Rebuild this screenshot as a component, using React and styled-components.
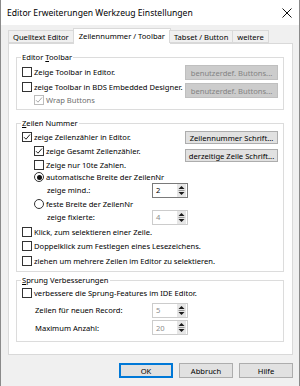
import React from "react";
import styled, { createGlobalStyle } from "styled-components";

const GlobalStyle = createGlobalStyle`
  html, body {
    margin: 0;
    padding: 0;
    background: #f0f0f0;
  }
  body {
    font-family: "Noto Sans", "Liberation Sans", sans-serif;
    font-size: 7.6px;
    color: #000;
  }
`;

const Check = ({ checked, disabled }) => (
  <CheckBox $disabled={disabled}>
    {checked && (
      <svg width="8" height="8" viewBox="0 0 8 8">
        <path
          d="M1 4.2 L3 6.2 L7 1.5"
          fill="none"
          stroke={disabled ? "#a8a8a8" : "#222"}
          strokeWidth="1"
        />
      </svg>
    )}
  </CheckBox>
);

const Radio = ({ checked }) => (
  <RadioCircle>{checked && <RadioDot />}</RadioCircle>
);

const Spin = ({ value, disabled }) => (
  <SpinBox $disabled={disabled}>
    <SpinValue $disabled={disabled}>{value}</SpinValue>
    <SpinArrows>
      <svg width="9" height="13" viewBox="0 0 9 13">
        <path d="M1.5 5 L4.5 2 L7.5 5 Z" fill="#1a1a1a" />
        <path d="M1.5 6.5 H7.5" stroke="#9a9a9a" strokeWidth="1" />
        <path d="M1.5 8 L4.5 11 L7.5 8 Z" fill="#1a1a1a" />
      </svg>
    </SpinArrows>
  </SpinBox>
);

export default function App() {
  return (
    <>
      <GlobalStyle />
      <Window>
        <TitleBar>
          <Title>Editor Erweiterungen Werkzeug Einstellungen</Title>
          <svg width="10" height="10" viewBox="0 0 10 10">
            <path d="M0.5 0.5 L9.5 9.5 M9.5 0.5 L0.5 9.5" stroke="#111" strokeWidth="1" />
          </svg>
        </TitleBar>
        <Body>
          <TabStrip>
            <Tab>Quelltext Editor</Tab>
            <Tab $active>Zeilennummer / Toolbar</Tab>
            <Tab>Tabset / Button</Tab>
            <Tab>weitere</Tab>
          </TabStrip>
          <Panel>
            <Group $top={13} $pt={6} $pb={3}>
              <Legend>
                Editor <u>T</u>oolbar
              </Legend>
              <Split>
                <Rows>
                  <Row $h={15}>
                    <Check />
                    <Label>Zeige Toolbar in Editor.</Label>
                  </Row>
                  <Row $h={15}>
                    <Check />
                    <Label>zeige Toolbar in BDS Embedded Designer.</Label>
                  </Row>
                  <Row $h={12} $indent={12}>
                    <Check checked disabled />
                    <Label $muted>Wrap Buttons</Label>
                  </Row>
                </Rows>
                <Side $pt={1} $gap={3}>
                  <Button $disabled $h={15}>benutzerdef. Buttons...</Button>
                  <Button $disabled $h={15}>benutzerdef. Buttons...</Button>
                </Side>
              </Split>
            </Group>

            <Group $top={13} $pt={6} $pb={3}>
              <Legend>
                <u>Z</u>eilen Nummer
              </Legend>
              <Split>
                <Rows>
                  <Row $h={14}>
                    <Check checked />
                    <Label>zeige Zeilenzähler in Editor.</Label>
                  </Row>
                  <Row $h={14} $indent={12}>
                    <Check checked />
                    <Label>zeige Gesamt Zeilenzähler.</Label>
                  </Row>
                  <Row $h={13} $indent={12}>
                    <Check />
                    <Label>Zeige nur 10te Zahlen.</Label>
                  </Row>
                  <Row $h={12} $indent={12}>
                    <Radio checked />
                    <Label>automatische Breite der ZeilenNr</Label>
                  </Row>
                  <Row $h={14} $indent={25}>
                    <FieldLabel $w={105}>zeige mind.:</FieldLabel>
                    <Spin value="2" />
                  </Row>
                  <Row $h={13} $indent={12}>
                    <Radio />
                    <Label>feste Breite der ZeilenNr</Label>
                  </Row>
                  <Row $h={14} $indent={25}>
                    <FieldLabel $w={105}>zeige fixierte:</FieldLabel>
                    <Spin value="4" disabled />
                  </Row>
                  <Row $h={15}>
                    <Check />
                    <Label>Klick, zum selektieren einer Zeile.</Label>
                  </Row>
                  <Row $h={14}>
                    <Check />
                    <Label>Doppelklick zum Festlegen eines Lesezeichens.</Label>
                  </Row>
                  <Row $h={15}>
                    <Check />
                    <Label>ziehen um mehrere Zeilen im Editor zu selektieren.</Label>
                  </Row>
                </Rows>
                <Side $pt={1} $gap={5}>
                  <Button $h={13}>Zeilennummer Schrift...</Button>
                  <Button $h={13}>derzeitige Zeile Schrift...</Button>
                </Side>
              </Split>
            </Group>

            <Group $top={8} $pt={5} $pb={6}>
              <Legend>
                <u>S</u>prung Verbesserungen
              </Legend>
              <Rows>
                <Row $h={14}>
                  <Check />
                  <Label>verbessere die Sprung-Features im IDE Editor.</Label>
                </Row>
                <Row $h={20} $indent={13}>
                  <FieldLabel $w={117}>Zeilen für neuen Record:</FieldLabel>
                  <Spin value="5" disabled />
                </Row>
                <Row $h={15} $indent={13}>
                  <FieldLabel $w={117}>Maximum Anzahl:</FieldLabel>
                  <Spin value="20" disabled />
                </Row>
              </Rows>
            </Group>
          </Panel>
          <Footer>
            <DialogButton $default>OK</DialogButton>
            <DialogButton>Abbruch</DialogButton>
            <DialogButton>Hilfe</DialogButton>
          </Footer>
        </Body>
      </Window>
    </>
  );
}

const Window = styled.div`
  width: 300px;
  height: 386px;
  box-sizing: border-box;
  background: #f0f0f0;
  border-left: 1px solid #8a8a8a;
  border-right: 1px solid #8a8a8a;
  overflow: hidden;
`;

const TitleBar = styled.div`
  height: 25px;
  background: #fff;
  display: flex;
  align-items: center;
  justify-content: space-between;
  padding: 0 7px 0 6px;
  box-sizing: border-box;
`;

const Title = styled.div`
  font-size: 8.6px;
  color: #000;
`;

const Body = styled.div`
  padding: 3px 6px 0 7px;
`;

const TabStrip = styled.div`
  display: flex;
  align-items: flex-end;
  height: 15px;
  position: relative;
  z-index: 1;
`;

const Tab = styled.div`
  box-sizing: border-box;
  height: ${(p) => (p.$active ? "16px" : "13px")};
  margin: ${(p) => (p.$active ? "0 -1px -1px" : "0")};
  padding: ${(p) => (p.$active ? "0 5px 2px" : "0 4px")};
  background: ${(p) => (p.$active ? "#fff" : "#f0f0f0")};
  border: 1px solid #d9d9d9;
  border-bottom: ${(p) => (p.$active ? "none" : "1px solid #d9d9d9")};
  margin-left: -1px;
  display: flex;
  align-items: center;
  white-space: nowrap;
  &:first-child {
    margin-left: 0;
  }
`;

const Panel = styled.div`
  box-sizing: border-box;
  height: 312px;
  background: #fff;
  border: 1px solid #d9d9d9;
  padding: 0 0 0 7px;
`;

const Group = styled.div`
  position: relative;
  width: 268px;
  box-sizing: border-box;
  margin-top: ${(p) => p.$top}px;
  border: 1px solid #dcdcdc;
  padding: ${(p) => p.$pt}px 0 ${(p) => p.$pb}px 5px;
`;

const Legend = styled.div`
  position: absolute;
  top: -6px;
  left: 4px;
  padding: 0 1px;
  background: #fff;
  line-height: 11px;
  u {
    text-decoration-thickness: 1px;
    text-underline-offset: 1px;
  }
`;

const Split = styled.div`
  display: flex;
`;

const Rows = styled.div`
  flex: 1;
  min-width: 0;
  display: flex;
  flex-direction: column;
`;

const Side = styled.div`
  flex-shrink: 0;
  width: 93px;
  margin-right: 5px;
  padding-top: ${(p) => p.$pt}px;
  display: flex;
  flex-direction: column;
  gap: ${(p) => p.$gap}px;
`;

const Row = styled.div`
  height: ${(p) => p.$h}px;
  display: flex;
  align-items: center;
  padding-left: ${(p) => p.$indent || 0}px;
  white-space: nowrap;
`;

const Label = styled.span`
  margin-left: 2px;
  color: ${(p) => (p.$muted ? "#6d6d6d" : "#000")};
`;

const FieldLabel = styled.span`
  width: ${(p) => p.$w}px;
  flex-shrink: 0;
`;

const CheckBox = styled.span`
  width: 10px;
  height: 10px;
  box-sizing: border-box;
  border: 1px solid ${(p) => (p.$disabled ? "#bcbcbc" : "#333")};
  background: #fff;
  display: flex;
  align-items: center;
  justify-content: center;
  flex-shrink: 0;
`;

const RadioCircle = styled.span`
  width: 10px;
  height: 10px;
  box-sizing: border-box;
  border: 1px solid #333;
  border-radius: 50%;
  background: #fff;
  display: flex;
  align-items: center;
  justify-content: center;
  flex-shrink: 0;
`;

const RadioDot = styled.span`
  width: 5px;
  height: 5px;
  border-radius: 50%;
  background: #111;
`;

const Button = styled.div`
  box-sizing: border-box;
  height: ${(p) => p.$h}px;
  background: ${(p) => (p.$disabled ? "#cccccc" : "#e1e1e1")};
  border: 1px solid ${(p) => (p.$disabled ? "#bfbfbf" : "#adadad")};
  color: ${(p) => (p.$disabled ? "#838383" : "#000")};
  display: flex;
  align-items: center;
  justify-content: center;
  white-space: nowrap;
  overflow: hidden;
`;

const SpinBox = styled.div`
  box-sizing: border-box;
  width: 36px;
  height: 15px;
  background: #fff;
  border: 1px solid ${(p) => (p.$disabled ? "#cccccc" : "#7a7a7a")};
  display: flex;
  align-items: center;
  flex-shrink: 0;
`;

const SpinValue = styled.span`
  flex: 1;
  padding-left: 3px;
  color: ${(p) => (p.$disabled ? "#8d8d8d" : "#000")};
`;

const SpinArrows = styled.span`
  width: 9px;
  height: 13px;
  margin-right: 1px;
  background: #e6e6e6;
  display: flex;
`;

const Footer = styled.div`
  display: flex;
  justify-content: flex-end;
  gap: 6px;
  margin-top: 8px;
`;

const DialogButton = styled.div`
  box-sizing: border-box;
  width: 54px;
  height: 15px;
  background: #e1e1e1;
  border: 1px solid ${(p) => (p.$default ? "#0078d7" : "#adadad")};
  box-shadow: ${(p) => (p.$default ? "inset 0 0 0 1px #0078d7" : "none")};
  display: flex;
  align-items: center;
  justify-content: center;
`;
